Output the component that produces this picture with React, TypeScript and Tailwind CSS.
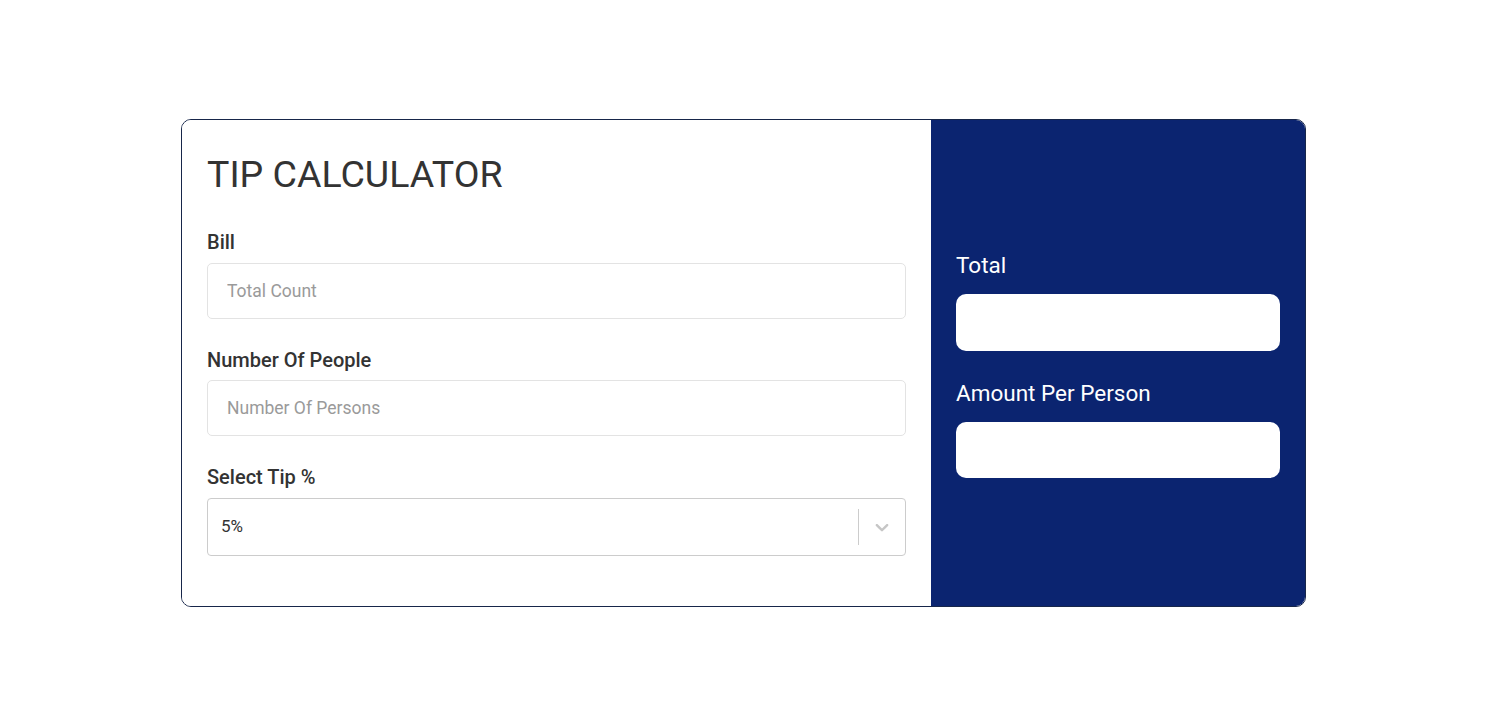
import React from "react";

export default function App() {
  return (
    <div className="min-h-[722px] w-full bg-white flex justify-start pl-[181px] pt-[119px]" style={{ fontFamily: "Roboto, 'Liberation Sans', sans-serif" }}>
      <div className="w-[1125px] h-[488px] flex rounded-[10px] border border-[#17264a] overflow-hidden">
        <div className="flex-1 bg-white pl-[25px] pr-[25px] pt-[32px]">
          <h1 className="text-[37.5px] leading-[44px] text-[#333333] font-normal">TIP CALCULATOR</h1>
          <label className="block mt-[35px] text-[20px] leading-[23px] font-medium text-[#333333]">Bill</label>
          <input
            className="mt-[9px] block w-full h-[56px] rounded-[5px] border border-[#e3e3e3] px-[19px] text-[17.5px] text-[#333] placeholder:text-[#9a9a9a] outline-none"
            placeholder="Total Count"
          />
          <label className="block mt-[30px] text-[20px] leading-[23px] font-medium text-[#333333]">Number Of People</label>
          <input
            className="mt-[8px] block w-full h-[56px] rounded-[5px] border border-[#e3e3e3] px-[19px] text-[17.5px] text-[#333] placeholder:text-[#9a9a9a] outline-none"
            placeholder="Number Of Persons"
          />
          <label className="block mt-[30px] text-[20px] leading-[23px] font-medium text-[#333333]">Select Tip %</label>
          <div className="mt-[9px] flex items-center h-[58px] rounded-[4px] border border-[#cccccc] bg-white">
            <span className="flex-1 pl-[13px] text-[17px] text-[#333333]">5%</span>
            <span className="w-px h-[36px] bg-[#cccccc]" />
            <span className="w-[46px] flex items-center justify-center text-[#c6c6c6]">
              <svg width="22" height="22" viewBox="0 0 20 20" fill="currentColor">
                <path d="M4.516 7.548c0.436-0.446 1.043-0.481 1.576 0l3.908 3.747 3.908-3.747c0.533-0.481 1.141-0.446 1.574 0 0.436 0.445 0.408 1.197 0 1.615-0.406 0.418-4.695 4.502-4.695 4.502-0.217 0.223-0.502 0.335-0.787 0.335s-0.57-0.112-0.789-0.335c0 0-4.287-4.084-4.695-4.502s-0.436-1.170 0-1.615z" />
              </svg>
            </span>
          </div>
        </div>
        <div className="w-[374px] bg-[#0b2470] flex flex-col justify-center pl-[25px] pr-[25px] pt-[4px]">
          <div className="text-[22.5px] leading-[26px] text-white">Total</div>
          <div className="mt-[16px] h-[57px] rounded-[10px] bg-white" />
          <div className="mt-[29px] text-[22.5px] leading-[26px] text-white">Amount Per Person</div>
          <div className="mt-[16px] h-[56px] rounded-[10px] bg-white" />
        </div>
      </div>
    </div>
  );
}
